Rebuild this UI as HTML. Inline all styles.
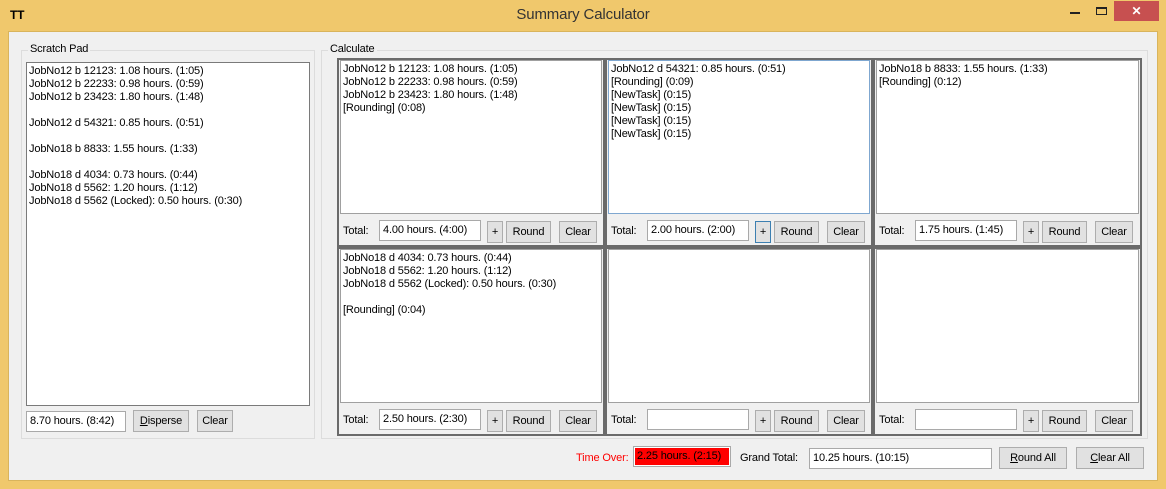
<!DOCTYPE html>
<html><head><meta charset="utf-8"><style>
*{margin:0;padding:0;box-sizing:border-box}
body{width:1166px;height:489px;background:#f0c86c;font-family:"Liberation Sans",sans-serif;font-size:11px;letter-spacing:-0.15px;color:#000;position:relative;overflow:hidden}
.a{position:absolute}
.client{position:absolute;left:8px;top:31px;width:1150px;height:450px;background:#f0f0f0;border:1px solid #d9b45c}
.gb{position:absolute;border:1px solid #dcdcdc}
.gl{position:absolute;background:#f0f0f0;padding:0 2px;top:-8px;left:6px;font-size:11px}
.tb{position:absolute;background:#fff;border:1px solid #7a7a7a;line-height:13px;padding:2px 2px;white-space:pre}
.in{position:absolute;background:#fff;border:1px solid #a9a9a9;height:21px;line-height:19px;padding-left:3px;white-space:pre}
.bt{position:absolute;background:#e1e1e1;border:1px solid #adadad;height:22px;line-height:20px;text-align:center}
.pn{position:absolute;border:2px solid #6a6a6a;background:#f0f0f0}
.lbl{position:absolute}
</style></head><body>
<div class="a" style="left:10px;top:8px;font-weight:bold;font-size:12px">TT</div>
<div class="a" style="left:0;width:1166px;top:6px;text-align:center;font-size:15px;color:#333">Summary Calculator</div>
<div class="a" style="left:1070px;top:12px;width:10px;height:2px;background:#222"></div>
<div class="a" style="left:1096px;top:7px;width:11px;height:8px;border:1px solid #222;border-top-width:2px"></div>
<div class="a" style="left:1114px;top:1px;width:45px;height:20px;background:#c75050;color:#fff;text-align:center;font-size:12px;font-weight:bold;line-height:20px">✕</div>
<div class="client"></div>

<div class="gb" style="left:21px;top:50px;width:294px;height:389px"><span class="gl">Scratch Pad</span></div>
<div class="tb" style="left:26px;top:62px;width:284px;height:344px">JobNo12 b 12123: 1.08 hours. (1:05)
JobNo12 b 22233: 0.98 hours. (0:59)
JobNo12 b 23423: 1.80 hours. (1:48)

JobNo12 d 54321: 0.85 hours. (0:51)

JobNo18 b 8833: 1.55 hours. (1:33)

JobNo18 d 4034: 0.73 hours. (0:44)
JobNo18 d 5562: 1.20 hours. (1:12)
JobNo18 d 5562 (Locked): 0.50 hours. (0:30)</div>
<div class="in" style="left:26px;top:411px;width:100px">8.70 hours. (8:42)</div>
<div class="bt" style="left:133px;top:410px;width:56px"><u>D</u>isperse</div>
<div class="bt" style="left:197px;top:410px;width:36px">Clear</div>

<div class="gb" style="left:321px;top:50px;width:827px;height:389px"><span class="gl">Calculate</span></div>

<div class="pn" style="left:337px;top:58px;width:268px;height:189px"></div>
<div class="pn" style="left:605px;top:58px;width:268px;height:189px"></div>
<div class="pn" style="left:873px;top:58px;width:269px;height:189px"></div>
<div class="pn" style="left:337px;top:247px;width:268px;height:189px"></div>
<div class="pn" style="left:605px;top:247px;width:268px;height:189px"></div>
<div class="pn" style="left:873px;top:247px;width:269px;height:189px"></div>

<div class="tb" style="left:340px;top:60px;width:262px;height:154px;border-color:#a0a0a0">JobNo12 b 12123: 1.08 hours. (1:05)
JobNo12 b 22233: 0.98 hours. (0:59)
JobNo12 b 23423: 1.80 hours. (1:48)
[Rounding] (0:08)</div>
<div class="tb" style="left:608px;top:60px;width:262px;height:154px;border-color:#7fa7d0">JobNo12 d 54321: 0.85 hours. (0:51)
[Rounding] (0:09)
[NewTask] (0:15)
[NewTask] (0:15)
[NewTask] (0:15)
[NewTask] (0:15)</div>
<div class="tb" style="left:876px;top:60px;width:263px;height:154px;border-color:#a0a0a0">JobNo18 b 8833: 1.55 hours. (1:33)
[Rounding] (0:12)</div>
<div class="tb" style="left:340px;top:249px;width:262px;height:154px;border-color:#a0a0a0">JobNo18 d 4034: 0.73 hours. (0:44)
JobNo18 d 5562: 1.20 hours. (1:12)
JobNo18 d 5562 (Locked): 0.50 hours. (0:30)

[Rounding] (0:04)</div>
<div class="tb" style="left:608px;top:249px;width:262px;height:154px;border-color:#a0a0a0"></div>
<div class="tb" style="left:876px;top:249px;width:263px;height:154px;border-color:#a0a0a0"></div>

<div class="lbl" style="left:343px;top:225px">Total:</div>
<div class="in" style="left:379px;top:220px;width:102px">4.00 hours. (4:00)</div>
<div class="bt" style="left:487px;top:221px;width:16px">+</div>
<div class="bt" style="left:506px;top:221px;width:45px">Round</div>
<div class="bt" style="left:559px;top:221px;width:38px">Clear</div>

<div class="lbl" style="left:611px;top:225px">Total:</div>
<div class="in" style="left:647px;top:220px;width:102px">2.00 hours. (2:00)</div>
<div class="bt" style="left:755px;top:221px;width:16px;border-color:#3c7fb1">+</div>
<div class="bt" style="left:774px;top:221px;width:45px">Round</div>
<div class="bt" style="left:827px;top:221px;width:38px">Clear</div>

<div class="lbl" style="left:879px;top:225px">Total:</div>
<div class="in" style="left:915px;top:220px;width:102px">1.75 hours. (1:45)</div>
<div class="bt" style="left:1023px;top:221px;width:16px">+</div>
<div class="bt" style="left:1042px;top:221px;width:45px">Round</div>
<div class="bt" style="left:1095px;top:221px;width:38px">Clear</div>

<div class="lbl" style="left:343px;top:414px">Total:</div>
<div class="in" style="left:379px;top:409px;width:102px">2.50 hours. (2:30)</div>
<div class="bt" style="left:487px;top:410px;width:16px">+</div>
<div class="bt" style="left:506px;top:410px;width:45px">Round</div>
<div class="bt" style="left:559px;top:410px;width:38px">Clear</div>

<div class="lbl" style="left:611px;top:414px">Total:</div>
<div class="in" style="left:647px;top:409px;width:102px"></div>
<div class="bt" style="left:755px;top:410px;width:16px">+</div>
<div class="bt" style="left:774px;top:410px;width:45px">Round</div>
<div class="bt" style="left:827px;top:410px;width:38px">Clear</div>

<div class="lbl" style="left:879px;top:414px">Total:</div>
<div class="in" style="left:915px;top:409px;width:102px"></div>
<div class="bt" style="left:1023px;top:410px;width:16px">+</div>
<div class="bt" style="left:1042px;top:410px;width:45px">Round</div>
<div class="bt" style="left:1095px;top:410px;width:38px">Clear</div>

<div class="lbl" style="left:576px;top:452px;color:#f00">Time Over:</div>
<div class="a" style="left:633px;top:446px;width:98px;height:21px;background:#f00;border:1px solid #a9a9a9;box-shadow:inset 0 0 0 1px #fff;line-height:19px;padding-left:3px">2.25 hours. (2:15)</div>
<div class="lbl" style="left:740px;top:452px">Grand Total:</div>
<div class="in" style="left:809px;top:448px;width:183px">10.25 hours. (10:15)</div>
<div class="bt" style="left:999px;top:447px;width:68px"><u>R</u>ound All</div>
<div class="bt" style="left:1076px;top:447px;width:68px"><u>C</u>lear All</div>
</body></html>
